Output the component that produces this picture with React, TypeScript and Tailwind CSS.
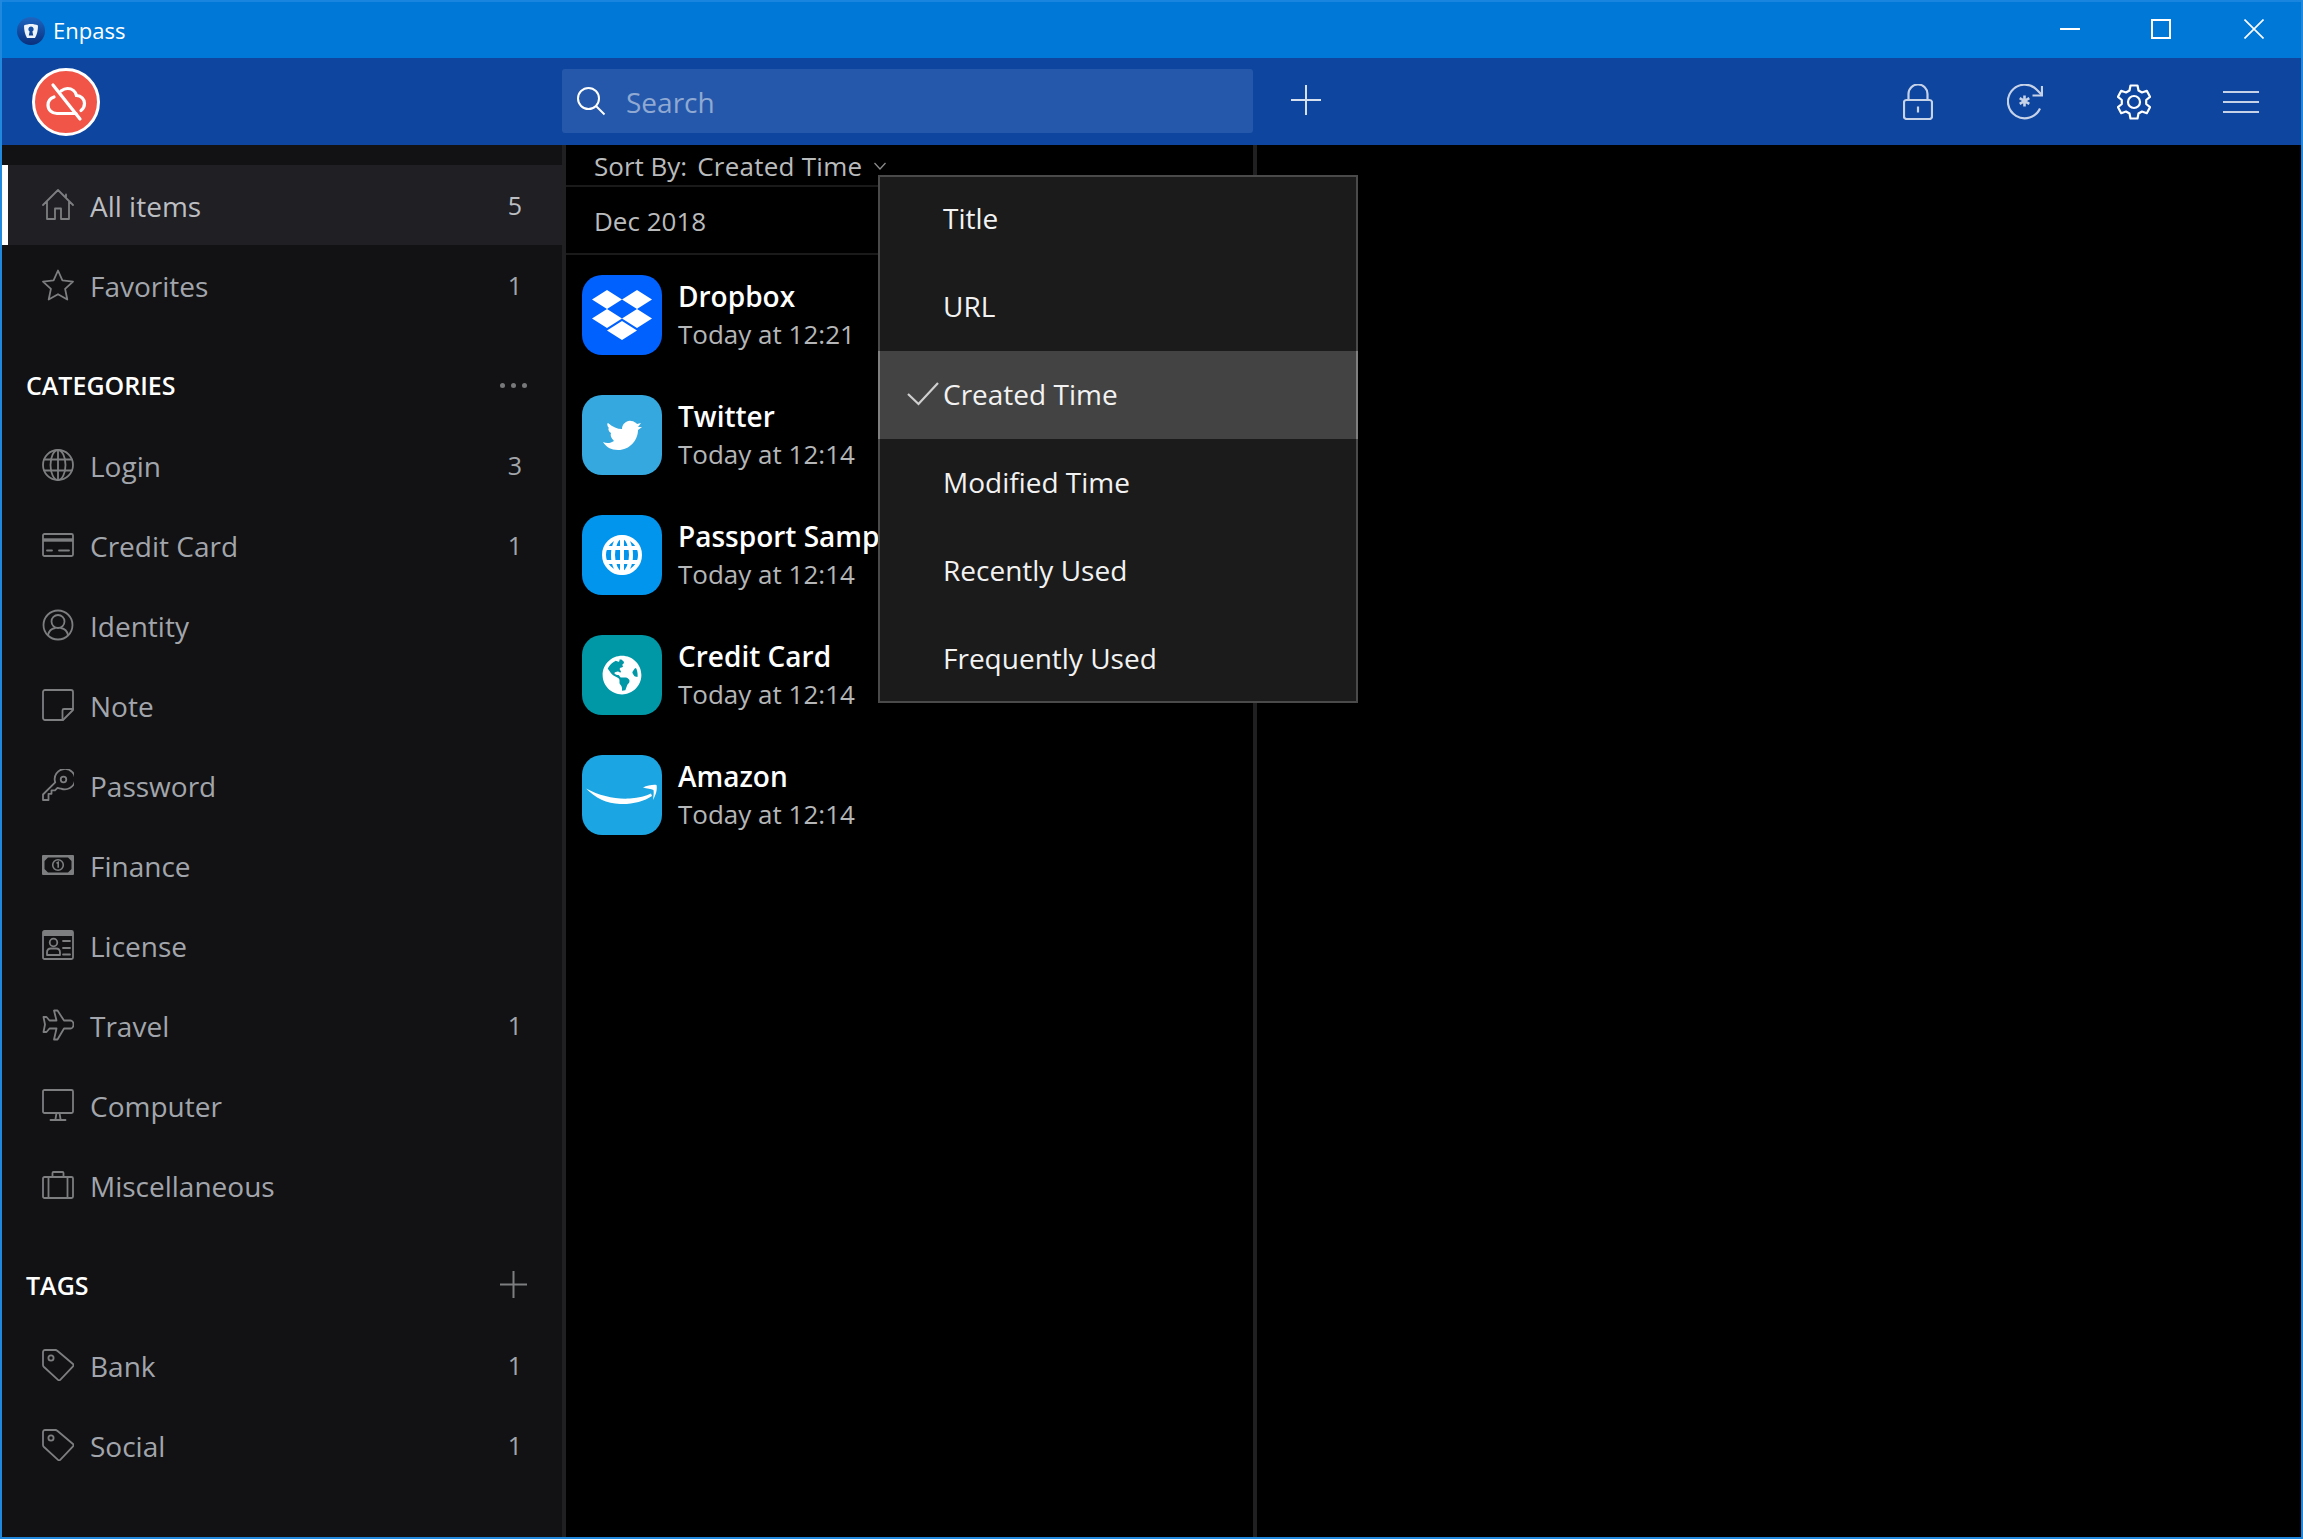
import React from "react";
import { FaGlobeAmericas } from "react-icons/fa";

const S = ({ w = 32, h = 32, children, className }: { w?: number; h?: number; children: React.ReactNode; className?: string }) => (
  <svg width={w} height={h} viewBox={`0 0 ${w} ${h}`} fill="none" stroke="currentColor" strokeWidth={1.8} strokeLinecap="round" strokeLinejoin="round" className={className}>
    {children}
  </svg>
);

const Home = () => (
  <S>
    <path d="M1 16 16 1l15 15M5 12.5V30h8V19.5h6V30h8V12.5M24 5.5V9" />
  </S>
);
const Star = () => (
  <S>
    <path d="M16 1.5l4.4 9.9 10.6 1.2-7.9 7.3 2.2 10.6L16 25.2 6.7 30.5l2.2-10.6L1 12.6l10.6-1.2z" />
  </S>
);
const Globe = () => (
  <S>
    <circle cx="16" cy="16" r="15" />
    <ellipse cx="16" cy="16" rx="7.5" ry="15" />
    <path d="M2.5 10.5h27M2.5 21.5h27M16 1v30" />
  </S>
);
const Card = () => (
  <S h={24}>
    <rect x="1" y="1" width="30" height="22" rx="1.5" />
    <path d="M1 7h30" strokeWidth={3.4} strokeLinecap="butt" />
    <path d="M5 17.5h5M17 17.5h10" />
  </S>
);
const Identity = () => (
  <S>
    <circle cx="16" cy="16" r="14.5" />
    <circle cx="16" cy="12.5" r="6.5" />
    <path d="M6 26c1-4.5 4.5-6.5 7-7M26 26c-1-4.5-4.5-6.5-7-7" />
  </S>
);
const Note = () => (
  <S>
    <path d="M3 1h26a2 2 0 0 1 2 2v18L21 31H3a2 2 0 0 1-2-2V3a2 2 0 0 1 2-2z" />
    <path d="M31 20H22a1.5 1.5 0 0 0-1.5 1.5V31" />
  </S>
);
const KeyI = () => (
  <S>
    <path d="M1 31v-5.500L13.200 13.400A10.200 10.200 0 1 1 19 19.600c-1.500 0-2.500-.3-3.500-.8L13 21.300H9.500v3.500H6.500V31z" />
    <circle cx="21.500" cy="10.500" r="2.800" />
  </S>
);
const Finance = () => (
  <svg width="32" height="20" viewBox="0 0 32 20" className="text-[#7d7e80]">
    <path fill="currentColor" fillRule="evenodd" d="M0 1a1 1 0 0 1 1-1h30a1 1 0 0 1 1 1v18a1 1 0 0 1-1 1H1a1 1 0 0 1-1-1zM6 2.500 2.500 6v8L6 17.500h20l3.500-3.500V6L26 2.500z" />
    <circle cx="16" cy="10" r="5.300" fill="none" stroke="currentColor" strokeWidth="1.600" />
    <path d="M14.500 8.300 16.200 7.300V12.800" fill="none" stroke="currentColor" strokeWidth="1.600" />
  </svg>
);
const License = () => (
  <S h={30}>
    <rect x="1" y="1" width="30" height="28" rx="1.500" />
    <path d="M1 4h30" strokeWidth={4} strokeLinecap="butt" />
    <circle cx="11.500" cy="12.500" r="3.800" />
    <path d="M5 25v-2.500c0-2.500 1.800-4 4-4h5c2.200 0 4 1.500 4 4V25zM21 11h7M21 18h7M21 24.500h7" />
  </S>
);
const Plane = () => (
  <S>
    <path d="M12 1.500h3.500L22 11.500h6.500c1.700 0 3 2 3 4s-1.300 4-3 4H22L15.500 30.500H12l2.500-11H7.500L4.500 23H1.500l1.500-7.500L1.500 8h3l3 3.500h7z" />
  </S>
);
const Computer = () => (
  <S>
    <rect x="1" y="1" width="30" height="23" rx="1.500" />
    <path d="M14.500 24l-1 6M17.500 24l1 6M8.500 31h15" />
  </S>
);
const Brief = () => (
  <S h={28}>
    <rect x="1" y="6" width="30" height="21" rx="1.500" />
    <path d="M10.500 6V2a1 1 0 0 1 1-1h9a1 1 0 0 1 1 1v4M6.500 6v21M25.500 6v21" />
  </S>
);
const Tag = () => (
  <S>
    <path d="M1 3a2 2 0 0 1 2-2h10.500c.7 0 1.300.3 1.800.8l15.700 13.200a1.500 1.500 0 0 1 0 2.300L18.200 30.800a1.500 1.500 0 0 1-2.200 0L2 18c-.6-.6-1-1.300-1-2.100z" />
    <circle cx="9" cy="9" r="2.600" />
  </S>
);

const Row = ({ icon, label, count, active }: { icon: React.ReactNode; label: string; count?: number; active?: boolean }) => (
  <div className={`flex h-[80px] shrink-0 items-center pr-[40px] ${active ? "border-l-[6px] border-white bg-[#1f1f24] pl-[34px]" : "pl-[40px]"}`}>
    <span className="flex w-[48px] shrink-0 items-center text-[#7d7e80]">{icon}</span>
    <span className={`flex-1 pt-[2px] text-[28px] leading-none ${active ? "text-[#bcbec2]" : "text-[#a2a6ac]"}`}>{label}</span>
    {count !== undefined && <span className={`text-[25px] leading-none ${active ? "text-[#bcbec2]" : "text-[#a2a6ac]"}`}>{count}</span>}
  </div>
);

const Header = ({ label, right }: { label: string; right?: React.ReactNode }) => (
  <div className="mt-[20px] flex h-[80px] shrink-0 items-center justify-between pl-[24px] pr-[35px]">
    <span className="text-[25px] font-semibold leading-none text-white">{label}</span>
    {right}
  </div>
);

const DropboxIcon = () => (
  <svg width="60" height="50" viewBox="0 0 60 50" fill="#fff">
    <path d="M15 0 30 9.500 15 19 0 9.500zM45 0 60 9.500 45 19 30 9.500zM15 19 30 28.500 15 38 0 28.500zM45 19 60 28.500 45 38 30 28.500zM30 31 45 40.500 30 50 15 40.500z" />
  </svg>
);
const Bird = () => (
  <svg width="39" height="30" viewBox="0 0 39 30" fill="#fff">
    <path d="M0 22C4 24 8 23 11 21 8 18 7 15 8 13 5 11 5 8 6 8 4 6 4 3 5 3 10 7 14 9 19 9 19 4 24 0 28 1 31 1 33 3 34 4L38 3 35 7 39 7 35 10C35 20 27 30 15 30 8 30 3 27 0 22Z" />
  </svg>
);
const PassGlobe = () => (
  <svg width="40" height="40" viewBox="0 0 40 40" fill="none" stroke="#fff" strokeWidth="4">
    <circle cx="20" cy="20" r="18" />
    <ellipse cx="20" cy="20" rx="9" ry="18" />
    <path d="M4 13h32M4 27h32M20 2v36" />
  </svg>
);
const Smile = () => (
  <svg width="72" height="24" viewBox="0 0 72 24" fill="#fff">
    <path d="M0 5.500C14 13 30 16.500 44 15.500 53 15 60 13 65 10.500L66 13C58 18.500 46 21.500 34 21 21 20.500 9 15 0 5.500z" />
    <path d="M57 4.500C61 2.500 67 1.500 70.500 2 71.500 6 70 12 67 17 67.500 13 68 9.500 67.500 7 65 6 61 5.500 57 4.500z" />
  </svg>
);

const items = [
  { name: "Dropbox", time: "Today at 12:21", bg: "bg-[#0061fe]", icon: <DropboxIcon /> },
  { name: "Twitter", time: "Today at 12:14", bg: "bg-[#35a9df]", icon: <Bird /> },
  { name: "Passport Sample", time: "Today at 12:14", bg: "bg-[#0295ee]", icon: <PassGlobe /> },
  { name: "Credit Card", time: "Today at 12:14", bg: "bg-[#0097a7]", icon: <FaGlobeAmericas size={40} color="#fff" /> },
  { name: "Amazon", time: "Today at 12:14", bg: "bg-[#1ba5e2]", icon: <Smile /> },
];

export default function App() {
  return (
    <div className="relative flex h-screen w-screen flex-col overflow-hidden border-x-2 border-b-2 border-[#2088dd] bg-black font-['Open_Sans','Noto_Sans',sans-serif]">
      {/* title bar */}
      <div className="flex h-[58px] shrink-0 items-center border-t-2 border-[#1a85de] bg-[#0078d7] pl-[15px]">
        <svg width="28" height="28" viewBox="0 0 28 28" className="mt-[1px]">
          <defs>
            <linearGradient id="g" x1="0" y1="0" x2="0" y2="1">
              <stop offset="0" stopColor="#1d66c2" />
              <stop offset="1" stopColor="#0a2f7c" />
            </linearGradient>
          </defs>
          <circle cx="14" cy="14" r="14" fill="url(#g)" />
          <path fill="#eef3fa" fillRule="evenodd" d="M7 8.500C9 7.500 11.500 7 14 7s5 .5 7 1.500c0 5-1 9-3 12.500h-8C8 17.500 7 13.500 7 8.500zM14 9.500a2.700 2.700 0 0 0-1.400 5l-.8 4h4.400l-.8-4A2.700 2.700 0 0 0 14 9.500z" />
        </svg>
        <span className="ml-[8px] text-[22px] leading-none text-white">Enpass</span>
        <div className="mb-[2px] ml-auto flex items-center pr-[37px]">
          <div className="h-[2px] w-[20px] bg-white" />
          <div className="ml-[71px] h-[20px] w-[20px] border-2 border-white" />
          <svg width="20" height="20" viewBox="0 0 20 20" className="ml-[73px]" stroke="#fff" strokeWidth="1.600">
            <path d="M.5.500l19 19M19.500.500l-19 19" />
          </svg>
        </div>
      </div>

      {/* toolbar */}
      <div className="flex h-[87px] shrink-0 items-center bg-[#0e459f]">
        <div className="ml-[30px] flex h-[68px] w-[68px] items-center justify-center rounded-full border-[3px] border-white bg-[#f05548]">
          <svg width="44" height="44" viewBox="0 0 44 44" fill="none" stroke="#fff" strokeWidth="3.200" strokeLinecap="round">
            <path d="M10 17c-4 1.500-6 4.500-6 8 0 5 4 8.500 9 8.500h19" />
            <path d="M17 11c2-1.500 4-2.500 6.500-2.500 4.500 0 8 3 9 7 4.500.2 8 3.500 8 8 0 3-1.500 5.500-3.500 7" />
            <path d="M9 5l27 34" />
          </svg>
        </div>
        <div className="mb-[1px] ml-[462px] flex h-[64px] w-[691px] items-center rounded-[3px] bg-[#2558aa] pl-[14px]">
          <svg width="30" height="30" viewBox="0 0 30 30" fill="none" stroke="#fff" strokeWidth="2">
            <circle cx="12.500" cy="12.500" r="10.500" />
            <path d="M20 20l8.500 8.500" />
          </svg>
          <span className="ml-[20px] pt-[2px] text-[28px] leading-none text-[#8fa9d3]">Search</span>
        </div>
        <svg width="30" height="30" viewBox="0 0 30 30" className="mb-[3px] ml-[38px]" stroke="#d7e0ef" strokeWidth="2">
          <path d="M15 0v30M0 15h30" />
        </svg>
        <div className="ml-auto flex items-center pr-[42px] text-[#c6d2e8]">
          <svg width="30" height="36" viewBox="0 0 30 36" fill="none" stroke="currentColor" strokeWidth="2.200">
            <rect x="1" y="16" width="28" height="19" rx="2.500" />
            <path d="M5.500 16V10a9.500 9.500 0 0 1 19 0v6M15 22.500v6" />
          </svg>
          <svg width="36" height="36" viewBox="0 0 36 36" fill="none" stroke="currentColor" strokeWidth="2.200" className="ml-[74px]">
            <path d="M33 24.500A16.800 16.800 0 1 1 29.500 5.500L35 11" />
            <path d="M35 2v9.500h-9.500" />
            <path d="M17.500 11.500v11M12.700 14.200l9.600 5.600M22.300 14.200l-9.600 5.600" strokeWidth="2.600" />
          </svg>
          <svg width="34" height="36" viewBox="0 0 34 36" fill="none" stroke="#fff" strokeWidth="2.200" strokeLinejoin="round" className="ml-[74px]">
            <circle cx="17" cy="18" r="6" />
            <path d="M13.500 1.500h7l1 5 3.500 2 4.800-1.700L33 12.800 29.200 16v4l3.800 3.200-3.200 6-4.800-1.700-3.500 2-1 5h-7l-1-5-3.500-2-4.800 1.700L1 23.200 4.800 20v-4L1 12.800l3.200-6L9 8.500l3.500-2z" />
          </svg>
          <div className="ml-[72px] flex w-[36px] flex-col gap-[8px]">
            <div className="h-[2px] w-full bg-current" />
            <div className="h-[2px] w-full bg-current" />
            <div className="h-[2px] w-full bg-current" />
          </div>
        </div>
      </div>

      {/* body */}
      <div className="flex min-h-0 flex-1">
        <aside className="flex w-[560px] shrink-0 flex-col overflow-hidden bg-[#121214] pt-[20px]">
          <Row active icon={<Home />} label="All items" count={5} />
          <Row icon={<Star />} label="Favorites" count={1} />
          <Header
            label="CATEGORIES"
            right={
              <span className="flex gap-[6px]">
                <i className="h-[5px] w-[5px] rounded-full bg-[#77787a]" />
                <i className="h-[5px] w-[5px] rounded-full bg-[#77787a]" />
                <i className="h-[5px] w-[5px] rounded-full bg-[#77787a]" />
              </span>
            }
          />
          <Row icon={<Globe />} label="Login" count={3} />
          <Row icon={<Card />} label="Credit Card" count={1} />
          <Row icon={<Identity />} label="Identity" />
          <Row icon={<Note />} label="Note" />
          <Row icon={<KeyI />} label="Password" />
          <Row icon={<Finance />} label="Finance" />
          <Row icon={<License />} label="License" />
          <Row icon={<Plane />} label="Travel" count={1} />
          <Row icon={<Computer />} label="Computer" />
          <Row icon={<Brief />} label="Miscellaneous" />
          <Header
            label="TAGS"
            right={
              <svg width="27" height="27" viewBox="0 0 27 27" stroke="#7d7e80" strokeWidth="2" className="-mt-[2px]">
                <path d="M13.500 0v27M0 13.500h27" />
              </svg>
            }
          />
          <Row icon={<Tag />} label="Bank" count={1} />
          <Row icon={<Tag />} label="Social" count={1} />
          <Header label="PASSWORD AUDIT" />
        </aside>

        <section className="flex w-[695px] shrink-0 flex-col border-x-4 border-[#202022] bg-black">
          <div className="flex h-[42px] shrink-0 items-center border-b-2 border-[#1a1a1a] pl-[28px] pt-[2px]">
            <span className="text-[26px] leading-none text-[#b9bbbd]">Sort By:</span>
            <span className="ml-[10px] text-[26px] leading-none tracking-[0.25px] text-[#b9bbbd]">Created Time</span>
            <svg width="12" height="8" viewBox="0 0 12 8" fill="none" stroke="#8a8a8a" strokeWidth="1.300" className="ml-[12px]">
              <path d="M.5 1l5.500 6 5.500-6" />
            </svg>
          </div>
          <div className="flex h-[68px] shrink-0 items-center border-b-2 border-[#1a1a1a] pl-[28px] pt-[1px]">
            <span className="text-[26px] leading-none text-[#b9bbbd]">Dec 2018</span>
          </div>
          <div className="flex flex-col pt-[20px]">
            {items.map((it) => (
              <div key={it.name} className="flex h-[120px] shrink-0 items-start pl-[16px]">
                <div className={`flex h-[80px] w-[80px] shrink-0 items-center justify-center rounded-[20px] ${it.bg}`}>{it.icon}</div>
                <div className="ml-[16px] flex flex-col pt-[2px]">
                  <span className="whitespace-nowrap text-[28px] font-semibold leading-[38px] text-white">{it.name}</span>
                  <span className="whitespace-nowrap text-[26px] leading-[38px] text-[#b4b6b8]">{it.time}</span>
                </div>
              </div>
            ))}
          </div>
        </section>
        <div className="flex-1 bg-black" />
      </div>

      {/* sort menu */}
      <div className="absolute left-[876px] top-[175px] flex h-[528px] w-[480px] flex-col border-2 border-[#4a4a4a] bg-[#1b1b1b] text-[28px] text-[#f2f2f2]">
        <div className="flex h-[86px] shrink-0 items-center pb-[4px] pl-[63px]">Title</div>
        <div className="flex h-[88px] shrink-0 items-center pb-[3px] pl-[63px]">URL</div>
        <div className="relative -mx-[2px] flex h-[88px] shrink-0 items-center border-x-2 border-[#7f7f7f] bg-[#434343] pb-[3px] pl-[63px]">
          <svg width="32" height="24" viewBox="0 0 32 24" fill="none" stroke="#cfcfcf" strokeWidth="2.200" className="absolute left-[27px] top-[31px]">
            <path d="M1 12l10.500 10L31 1" />
          </svg>
          Created Time
        </div>
        <div className="flex h-[88px] shrink-0 items-center pb-[2px] pl-[63px]">Modified Time</div>
        <div className="flex h-[88px] shrink-0 items-center pb-[2px] pl-[63px]">Recently Used</div>
        <div className="flex h-[86px] shrink-0 items-center pb-[1px] pl-[63px]">Frequently Used</div>
      </div>
    </div>
  );
}
